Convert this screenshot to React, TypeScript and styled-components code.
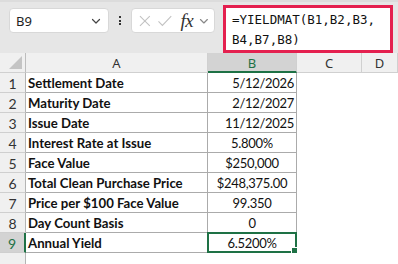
import React from "react";
import styled, { createGlobalStyle } from "styled-components";

const GlobalStyle = createGlobalStyle`
  html, body {
    margin: 0;
    padding: 0;
    background: #ffffff;
  }
  body {
    width: 398px;
    height: 264px;
    overflow: hidden;
    font-family: "Lato", "Liberation Sans", sans-serif;
  }
`;

const GREEN = "#1e7145";

const Page = styled.div`
  width: 398px;
  height: 264px;
  overflow: hidden;
  display: flex;
  flex-direction: column;
`;

const Toolbar = styled.div`
  height: 60px;
  box-sizing: border-box;
  background: #e6e6e6;
  border-top: 2px solid #dcdcdc;
  display: flex;
  align-items: flex-start;
  padding: 3px 0 0 9px;
`;

const NameBox = styled.div`
  margin-top: 3px;
  width: 100px;
  height: 25px;
  box-sizing: border-box;
  background: #ffffff;
  border: 1px solid #d8d8d8;
  border-radius: 4px;
  display: flex;
  align-items: center;
  justify-content: space-between;
  padding: 0 6px 0 6px;
  font-family: "Noto Sans", "Open Sans", sans-serif;
  font-size: 13px;
  color: #222;
`;

const Dots = styled.div`
  width: 22px;
  height: 31px;
  display: flex;
  flex-direction: column;
  align-items: center;
  justify-content: center;
  gap: 1.5px;

  span {
    width: 2px;
    height: 2px;
    background: #333;
  }
`;

const FxBox = styled.div`
  margin-top: 3px;
  width: 84px;
  height: 25px;
  box-sizing: border-box;
  background: #ffffff;
  border: 1px solid #d8d8d8;
  border-radius: 4px;
  display: flex;
  align-items: center;
  padding: 0 4px 0 6px;
  gap: 5px;
`;

const Fx = styled.span`
  font-family: "Liberation Serif", "DejaVu Serif", serif;
  font-style: italic;
  font-size: 19px;
  line-height: 20px;
  color: #333;
  margin-left: 3px;
  letter-spacing: -0.5px;
`;

const FormulaBox = styled.div`
  margin-left: 8px;
  width: 170px;
  height: 48px;
  box-sizing: border-box;
  background: #ffffff;
  border: 3px solid #e4204f;
  padding: 2px 0 0 6px;
  font-family: "DejaVu Sans Mono", "Liberation Mono", monospace;
  font-size: 12.5px;
  line-height: 20px;
  color: #111;
  white-space: pre;
`;

const Sheet = styled.div`
  display: grid;
  grid-template-columns: 26px 182px 89px 65px 1fr;
  grid-auto-rows: 20px;
`;

const Corner = styled.div`
  background: #f0f0f0;
  border-right: 1px solid #bdbdbd;
  border-bottom: 1px solid #d0d0d0;
  position: relative;
  box-sizing: border-box;
`;

const CornerTriangle = styled.div`
  position: absolute;
  right: 3px;
  bottom: 3px;
  width: 0;
  height: 0;
  border-left: 13px solid transparent;
  border-bottom: 13px solid #c4c4c4;
`;

const ColHead = styled.div<{ $active?: boolean }>`
  box-sizing: border-box;
  background: ${(p) => (p.$active ? "#d3d3d3" : "#f0f0f0")};
  border-right: 1px solid #d0d0d0;
  border-bottom: ${(p) => (p.$active ? `2px solid ${GREEN}` : "1px solid #d0d0d0")};
  display: flex;
  align-items: center;
  justify-content: center;
  padding-top: ${(p) => (p.$active ? "2px" : "1px")};
  font-family: "Noto Sans", "Open Sans", sans-serif;
  font-size: 13px;
  color: ${(p) => (p.$active ? GREEN : "#333")};
`;

const RowHead = styled.div<{ $active?: boolean }>`
  box-sizing: border-box;
  background: ${(p) => (p.$active ? "#d3d3d3" : "#f0f0f0")};
  border-right: ${(p) => (p.$active ? `2px solid ${GREEN}` : "1px solid #b4b4b4")};
  border-bottom: 1px solid #cfcfcf;
  display: flex;
  align-items: center;
  justify-content: center;
  padding-top: 1px;
  font-family: "Lato", "Liberation Sans", sans-serif;
  font-size: 14px;
  color: ${(p) => (p.$active ? GREEN : "#333")};
`;

const Cell = styled.div<{ $align?: "left" | "right" | "center"; $bold?: boolean; $bordered?: boolean }>`
  position: relative;
  box-sizing: border-box;
  border-right: ${(p) => (p.$bordered ? "1px solid #ababab" : "none")};
  border-bottom: ${(p) => (p.$bordered ? "1px solid #ababab" : "none")};
  display: flex;
  align-items: center;
  justify-content: ${(p) =>
    p.$align === "right" ? "flex-end" : p.$align === "center" ? "center" : "flex-start"};
  padding: 1px 2px 0 2px;
  font-family: "Lato", "Liberation Sans", sans-serif;
  font-size: ${(p) => (p.$bold ? "13.2px" : "13px")};
  letter-spacing: ${(p) => (p.$bold ? "0" : "-0.3px")};
  font-weight: ${(p) => (p.$bold ? 700 : 400)};
  color: #111;
  white-space: nowrap;
`;

const Selection = styled.div`
  position: absolute;
  left: -1px;
  top: -1px;
  right: -1px;
  bottom: -1px;
  border: 2px solid ${GREEN};
  pointer-events: none;
`;

const Handle = styled.div`
  position: absolute;
  right: -3px;
  bottom: -3px;
  width: 5px;
  height: 5px;
  background: ${GREEN};
  border: 1px solid #ffffff;
  box-sizing: content-box;
`;

const Chevron = ({ color = "#444" }: { color?: string }) => (
  <svg width="12" height="12" viewBox="0 0 12 12" fill="none">
    <path d="M2.5 4.5 L6 8 L9.5 4.5" stroke={color} strokeWidth="1.2" strokeLinecap="round" strokeLinejoin="round" />
  </svg>
);

const CrossIcon = () => (
  <svg width="14" height="14" viewBox="0 0 14 14" fill="none">
    <path d="M2 2 L12 12 M12 2 L2 12" stroke="#c2c2c2" strokeWidth="1.1" />
  </svg>
);

const CheckIcon = () => (
  <svg width="16" height="14" viewBox="0 0 16 14" fill="none">
    <path d="M1.5 7.5 L5.5 11.5 L14.5 2" stroke="#c2c2c2" strokeWidth="1.1" />
  </svg>
);

type Row = { label: string; value: string; align: "left" | "right" | "center" };

const rows: Row[] = [
  { label: "Settlement Date", value: "5/12/2026", align: "right" },
  { label: "Maturity Date", value: "2/12/2027", align: "right" },
  { label: "Issue Date", value: "11/12/2025", align: "right" },
  { label: "Interest Rate at Issue", value: "5.800%", align: "center" },
  { label: "Face Value", value: "$250,000", align: "center" },
  { label: "Total Clean Purchase Price", value: "$248,375.00", align: "center" },
  { label: "Price per $100 Face Value", value: "99.350", align: "center" },
  { label: "Day Count Basis", value: "0", align: "center" },
  { label: "Annual Yield", value: "6.5200%", align: "center" },
];

const App = () => {
  return (
    <Page>
      <GlobalStyle />
      <Toolbar>
        <NameBox>
          <span>B9</span>
          <Chevron />
        </NameBox>
        <Dots>
          <span />
          <span />
          <span />
        </Dots>
        <FxBox>
          <CrossIcon />
          <CheckIcon />
          <Fx>fx</Fx>
          <Chevron color="#888" />
        </FxBox>
        <FormulaBox>{"=YIELDMAT(B1,B2,B3,\nB4,B7,B8)"}</FormulaBox>
      </Toolbar>
      <Sheet>
        <Corner>
          <CornerTriangle />
        </Corner>
        <ColHead>A</ColHead>
        <ColHead $active>B</ColHead>
        <ColHead>C</ColHead>
        <ColHead>D</ColHead>
        {rows.map((r, i) => (
          <React.Fragment key={i}>
            <RowHead $active={i === 8}>{i + 1}</RowHead>
            <Cell $bold $bordered>
              {r.label}
            </Cell>
            <Cell $align={r.align} $bordered>
              {r.value}
              {i === 8 && (
                <Selection>
                  <Handle />
                </Selection>
              )}
            </Cell>
            <Cell />
            <Cell />
          </React.Fragment>
        ))}
        <RowHead />
        <Cell />
        <Cell />
        <Cell />
        <Cell />
      </Sheet>
    </Page>
  );
};

export default App;
